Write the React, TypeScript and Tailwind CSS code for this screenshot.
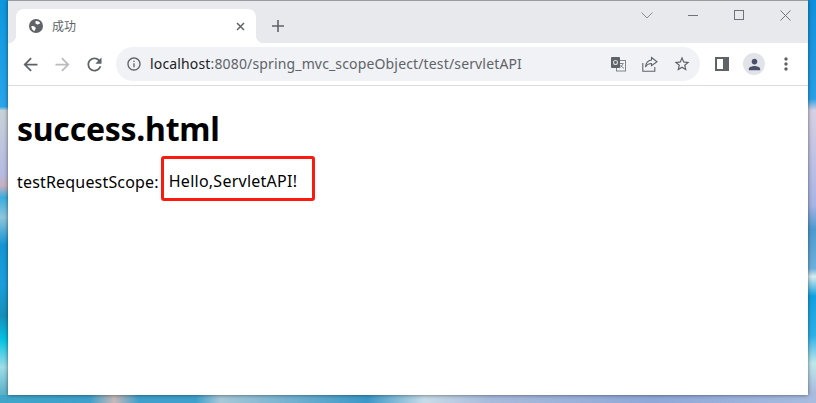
const iconColor = "#5f6368"

function Icon({ d, size = 20, color = iconColor }: { d: string; size?: number; color?: string }) {
  return (
    <svg width={size} height={size} viewBox="0 0 24 24" fill={color}>
      <path d={d} />
    </svg>
  )
}

const paths = {
  back: "M20 11H7.83l5.59-5.59L12 4l-8 8 8 8 1.41-1.41L7.83 13H20v-2z",
  forward: "M4 11h12.17l-5.59-5.59L12 4l8 8-8 8-1.41-1.41L16.17 13H4v-2z",
  reload:
    "M17.65 6.35C16.2 4.9 14.21 4 12 4c-4.42 0-7.99 3.58-7.99 8s3.57 8 7.99 8c3.73 0 6.84-2.55 7.73-6h-2.08c-.82 2.33-3.04 4-5.65 4-3.31 0-6-2.69-6-6s2.69-6 6-6c1.66 0 3.14.69 4.22 1.78L13 11h7V4l-2.35 2.35z",
  info: "M11 7h2v2h-2zm0 4h2v6h-2zm1-9C6.48 2 2 6.48 2 12s4.48 10 10 10 10-4.48 10-10S17.52 2 12 2zm0 18c-4.41 0-8-3.59-8-8s3.59-8 8-8 8 3.59 8 8-3.59 8-8 8z",
  star: "M22 9.24l-7.19-.62L12 2 9.19 8.63 2 9.24l5.46 4.73L5.82 21 12 17.27 18.18 21l-1.63-7.03L22 9.24zM12 15.4l-3.76 2.27 1-4.28-3.32-2.88 4.38-.38L12 6.1l1.71 4.04 4.38.38-3.32 2.88 1 4.28L12 15.4z",
  person: "M12 12c2.21 0 4-1.79 4-4s-1.79-4-4-4-4 1.79-4 4 1.79 4 4 4zm0 2c-2.67 0-8 1.34-8 4v2h16v-2c0-2.66-5.33-4-8-4z",
  more: "M12 8c1.1 0 2-.9 2-2s-.9-2-2-2-2 .9-2 2 .9 2 2 2zm0 2c-1.1 0-2 .9-2 2s.9 2 2 2 2-.9 2-2-.9-2-2-2zm0 6c-1.1 0-2 .9-2 2s.9 2 2 2 2-.9 2-2-.9-2-2-2z",
}

function GlobeIcon() {
  return (
    <svg width="14" height="14" viewBox="0 0 14 14">
      <circle cx="7" cy="7" r="7" fill={iconColor} />
      <path d="M6.500 2.200C8.500 1.800 10.500 2.600 11.300 4.200 10.300 4.800 9.500 4.900 8.600 5.600 7.700 5.300 7.300 4.300 6.500 4.400z" fill="#fff" />
      <path d="M2.300 7.200C3.500 6.800 5.300 7.300 6.300 8.200 7 8.900 6.600 9.800 6.200 10.400 6 11.200 5.800 11.700 5.300 12 3.500 11.300 2.400 9.400 2.300 7.200z" fill="#fff" />
    </svg>
  )
}

function TranslateIcon() {
  return (
    <svg width="15" height="15" viewBox="0 0 15 15" fill="none">
      <rect x="5.500" y="3.500" width="9" height="10.500" fill="#f4f5f6" stroke="#80848a" />
      <path d="M8 6.500h4.500M12 6.500c-.5 2-2 3.500-3.500 4.500M9.500 8c.7 1.500 2 2.600 3.500 3.300" stroke="#80848a" />
      <rect x="0" y="0" width="9" height="11" rx="1" fill={iconColor} />
      <circle cx="4.500" cy="5.500" r="2" stroke="#d8dadd" strokeWidth="1.100" />
    </svg>
  )
}

function ShareIcon() {
  return (
    <svg width="16" height="16" viewBox="0 0 16 16" fill="none" stroke={iconColor} strokeWidth="1.100">
      <path d="M.8 7v8.200h12V11" />
      <path d="M9.500 1.500 15 5.700l-5.500 4V7.500C7 7.500 5 8.500 3.500 11c.3-4 2.500-6.500 6-7z" />
    </svg>
  )
}

function ToolButton({ children }: { children: React.ReactNode }) {
  return <div className="flex h-8 w-8 items-center justify-center">{children}</div>
}

function WindowControls() {
  return (
    <div className="ml-auto flex self-start pt-[5px]">
      <div className="flex h-[18px] w-[46px] items-center justify-center">
        <svg width="12" height="7" viewBox="0 0 12 7" fill="none" stroke="#8a8d91">
          <path d="M.5.5 6 6 11.500.5" />
        </svg>
      </div>
      <div className="flex h-[18px] w-[46px] items-center justify-center">
        <div className="h-px w-[10px] bg-[#6f7276]" />
      </div>
      <div className="flex h-[18px] w-[46px] items-center justify-center">
        <div className="h-[10px] w-[10px] border border-[#6f7276]" />
      </div>
      <div className="flex h-[18px] w-[46px] items-center justify-center">
        <svg width="11" height="11" viewBox="0 0 11 11" stroke="#6f7276">
          <path d="M.5.5l10 10M10.500.5l-10 10" />
        </svg>
      </div>
    </div>
  )
}

function TabStrip() {
  return (
    <div className="flex h-[43px] shrink-0 items-end border-t border-[#9a9c9f] bg-[#e7e9ec] pl-2">
      <div className="relative flex h-[34px] w-[240px] items-center rounded-t-lg bg-white pl-[13px] pr-[11px]">
        <span className="absolute bottom-0 -left-2 h-2 w-2 bg-[radial-gradient(circle_at_0_0,#e7e9ec_8px,#ffffff_8.5px)]" />
        <span className="absolute -right-2 bottom-0 h-2 w-2 bg-[radial-gradient(circle_at_100%_0,#e7e9ec_8px,#ffffff_8.5px)]" />
        <GlobeIcon />
        <span className="ml-[9px] text-xs text-[#5f6368] [font-family:'Noto_Sans_CJK_SC',sans-serif]">成功</span>
        <svg className="ml-auto" width="9" height="9" viewBox="0 0 9 9" stroke={iconColor} strokeWidth="1.500">
          <path d="M1 1l7 7M8 1L1 8" />
        </svg>
      </div>
      <div className="ml-[9px] flex h-[34px] w-[26px] items-center justify-center">
        <svg width="12" height="12" viewBox="0 0 12 12" stroke={iconColor} strokeWidth="1.600">
          <path d="M6 0v12M0 6h12" />
        </svg>
      </div>
      <WindowControls />
    </div>
  )
}

function Toolbar() {
  return (
    <div className="flex h-[43px] shrink-0 items-center border-b border-[#dadce0] bg-white pl-[6px]">
      <ToolButton>
        <Icon d={paths.back} size={21} />
      </ToolButton>
      <ToolButton>
        <Icon d={paths.forward} size={21} color="#b9bbbe" />
      </ToolButton>
      <ToolButton>
        <Icon d={paths.reload} size={21} />
      </ToolButton>
      <div className="ml-[6px] flex h-[34px] w-[584px] items-center rounded-full bg-[#f0f2f5] pl-[10px] pr-[2px]">
        <Icon d={paths.info} size={16} />
        <span className="ml-2 text-sm tracking-[0.15px] text-[#5f6368] [font-family:'Noto_Sans',sans-serif]">
          <span className="text-[#202124]">localhost</span>:8080/spring_mvc_scopeObject/test/servletAPI
        </span>
        <div className="ml-auto flex">
          <ToolButton>
            <TranslateIcon />
          </ToolButton>
          <ToolButton>
            <ShareIcon />
          </ToolButton>
          <ToolButton>
            <Icon d={paths.star} size={18} />
          </ToolButton>
        </div>
      </div>
      <div className="ml-[6px] flex">
        <ToolButton>
          <div className="h-[14px] w-[14px] border-2 border-r-[6px] border-[#5f6368]" />
        </ToolButton>
        <ToolButton>
          <div className="flex h-[22px] w-[22px] items-center justify-center rounded-full bg-[#e1e3e8]">
            <Icon d={paths.person} size={17} color="#4a5068" />
          </div>
        </ToolButton>
        <ToolButton>
          <Icon d={paths.more} />
        </ToolButton>
      </div>
    </div>
  )
}

export default function App() {
  return (
    <div className="flex h-[403px] w-[816px] flex-col overflow-hidden [font-family:'Noto_Sans',sans-serif]">
      <div className="flex min-h-0 flex-1">
        <div className="w-2 shrink-0 bg-[linear-gradient(180deg,#0d97dd_0%,#2aa5ea_27%,#c9d2d8_28%,#b5bce2_44%,#c9b0c0_47%,#3aaee0_50%,#8fc6dc_55%,#1596d4_62%,#1b9fdc_72%,#168fba_80%,#05c3e4_86%,#9fdde8_93%,#5ab0c8_100%)]" />
        <div className="relative z-10 flex w-[800px] shrink-0 flex-col bg-white shadow-[0_0_4px_rgba(0,0,0,0.55)]">
          <TabStrip />
          <Toolbar />
          <main className="px-[9px] text-black">
            <h1 className="mt-[21px] text-[32px] leading-[44px] font-bold tracking-[-0.25px]">success.html</h1>
            <div className="mt-[5px] flex items-center text-base">
              <span className="pt-[7px] tracking-[0.18px]">testRequestScope:</span>
              <span className="ml-[2px] flex h-[45px] w-[154px] items-center rounded-[3px] border-[3px] border-[#fb1a10] pt-[5px] pl-[5px] tracking-[0.25px]">
                Hello,ServletAPI!
              </span>
            </div>
          </main>
        </div>
        <div className="w-2 shrink-0 bg-[linear-gradient(180deg,#0f90dc_0%,#2a9fe6_25%,#d8d0e4_28%,#a8b4e4_52%,#4d9ad0_58%,#6eb0dc_68%,#d8ecf0_70%,#12a0e0_75%,#2fb0e8_85%,#c0e8ec_92%,#a8b8dc_100%)]" />
      </div>
      <div className="h-2 shrink-0 bg-[linear-gradient(90deg,#3fa6c8_0%,#3ea0cc_11%,#c8b8b8_14%,#3fa0cc_17%,#3ea0cc_24%,#a8c8d8_27%,#3a98c8_45%,#c8dce8_52%,#a9bbdc_60%,#8fa8d8_80%,#a8bce0_100%)]" />
    </div>
  )
}
